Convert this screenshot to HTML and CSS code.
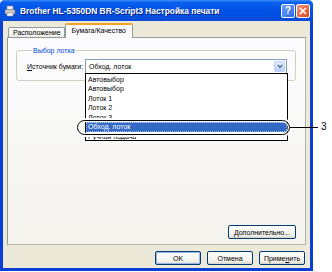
FILE: index.html
```html
<!DOCTYPE html>
<html lang="ru">
<head>
    <meta charset="UTF-8">
    <title>Brother HL-5350DN BR-Script3 Настройка печати</title>
    <link rel="stylesheet" href="styles.css">
</head>
<body>

    <div class="window">
        <div class="titlebar">
            <svg class="app-icon" width="12" height="12" viewBox="0 0 12 12">
                <rect x="3" y="1" width="6" height="4" fill="#f4f4f4" stroke="#8a8a8a" stroke-width="0.6"/>
                <rect x="1" y="4.5" width="10" height="4.5" rx="1" fill="#c9c9c9" stroke="#6d6d6d" stroke-width="0.6"/>
                <rect x="3" y="8" width="6" height="3" fill="#ffffff" stroke="#8a8a8a" stroke-width="0.6"/>
            </svg>
            <span class="title">Brother HL-5350DN BR-Script3 Настройка печати</span>
            <div class="caption-btns">
                <span class="cap-btn help">?</span>
                <span class="cap-btn close">
                    <svg width="8" height="8" viewBox="0 0 8 8">
                        <path d="M1 1 L7 7 M7 1 L1 7" stroke="#fff" stroke-width="1.6"/>
                    </svg>
                </span>
            </div>
        </div>

        <div class="client">
            <div class="tabs">
                <span class="tab">Расположение</span>
                <span class="tab active">Бумага/Качество</span>
            </div>

            <div class="tab-page">
                <fieldset class="group">
                    <legend>Выбор лотка</legend>
                    <div class="row">
                        <span class="label"><u>И</u>сточник бумаги:</span>
                        <div class="combo">
                            <span class="combo-text">Обход. лоток</span>
                            <span class="combo-arrow">
                                <svg width="6" height="5" viewBox="0 0 6 5">
                                    <path d="M0.8 1 L3 3.3 L5.2 1" fill="none" stroke="#4d6185" stroke-width="1.2"/>
                                </svg>
                            </span>
                        </div>
                    </div>
                </fieldset>

                <div class="page-foot">
                    <button class="btn wide"><u>Д</u>ополнительно...</button>
                </div>
            </div>

            <div class="dialog-btns">
                <button class="btn default">OK</button>
                <button class="btn">Отмена</button>
                <button class="btn">Приме<u>н</u>ить</button>
            </div>
        </div>
    </div>

    <ul class="droplist">
        <li>Автовыбор</li>
        <li>Автовыбор</li>
        <li>Лоток 1</li>
        <li>Лоток 2</li>
        <li>Лоток 3</li>
        <li class="selected"><span>Обход. лоток</span></li>
        <li>Ручная подача</li>
    </ul>

    <div class="callout-ring"></div>
    <div class="callout-line"></div>
    <span class="callout-num">3</span>

</body>
</html>
```

FILE: styles.css
```css
* {
    margin: 0;
    padding: 0;
    box-sizing: border-box;
}

body {
    width: 332px;
    height: 272px;
    background: #fff;
    font-family: 'Liberation Sans', Arial, sans-serif;
    font-size: 7px;
    color: #000;
    position: relative;
    overflow: hidden;
}

.window {
    width: 313px;
    height: 271px;
    display: flex;
    flex-direction: column;
    background: #0a3fd6;
    border-radius: 5px 5px 0 0;
}

.titlebar {
    height: 21px;
    display: flex;
    align-items: center;
    padding: 0 3px 0 4px;
    border-radius: 5px 5px 0 0;
    background: linear-gradient(#3d8cf7 0%, #0a5ff0 12%, #0053e6 45%, #0050e3 70%, #0a4bd8 100%);
}

.app-icon {
    margin-right: 4px;
}

.title {
    flex: 1;
    color: #fff;
    font-weight: bold;
    font-size: 8.4px;
    text-shadow: 1px 1px 0 #0a1e7a;
}

.caption-btns {
    display: flex;
    gap: 1px;
}

.cap-btn {
    width: 14px;
    height: 14px;
    border: 1px solid #fff;
    border-radius: 2px;
    display: flex;
    align-items: center;
    justify-content: center;
    color: #fff;
    font-weight: bold;
    font-size: 10px;
}

.help {
    background: linear-gradient(135deg, #6ea2fb, #2d68e6);
}

.close {
    background: linear-gradient(135deg, #f09a7c, #d9471f);
}

.client {
    flex: 1;
    margin: 0 3px 3px 3px;
    background: #ece9d8;
    padding: 2px 4px 0 4px;
    display: flex;
    flex-direction: column;
}

.tabs {
    display: flex;
    align-items: flex-end;
    height: 14px;
    padding-left: 1px;
    position: relative;
    z-index: 1;
}

.tab {
    height: 10px;
    line-height: 9px;
    padding: 0 3px 0 4px;
    border: 1px solid #919b9c;
    border-bottom: none;
    border-radius: 2px 2px 0 0;
    background: linear-gradient(#fefefe, #ecebe5);
}

.tab.active {
    height: 15px;
    line-height: 11px;
    margin-bottom: -1px;
    padding: 0 6px 0 6px;
    background: #fcfcfe;
    border-top: 2px solid #f4a529;
}

.tab-page {
    height: 208px;
    border: 1px solid #919b9c;
    border-right-color: #b5b4ab;
    border-bottom-color: #b5b4ab;
    background: linear-gradient(#fcfcfe, #f4f3ee);
    padding: 8px 9px 0 8px;
    display: flex;
    flex-direction: column;
}

.group {
    height: 35px;
    border: 1px solid #d0d0bf;
    border-radius: 3px;
    padding: 4px 8px 0 10px;
}

.group legend {
    color: #0046d5;
    padding: 0 1px;
    margin-left: 5px;
    line-height: 9px;
}

.row {
    display: flex;
    align-items: center;
}

.label {
    width: 58px;
}

.combo {
    flex: 1;
    height: 15px;
    border: 1px solid #7f9db9;
    background: #fff;
    display: flex;
    align-items: center;
    padding: 0 1px 0 3px;
}

.combo-text {
    flex: 1;
}

.combo-arrow {
    width: 11px;
    height: 11px;
    border-radius: 1px;
    background: linear-gradient(#e2ecfd, #b9d0f6);
    border: 1px solid #c3d3fd;
    display: flex;
    align-items: center;
    justify-content: center;
}

.page-foot {
    margin-top: auto;
    display: flex;
    justify-content: flex-end;
    padding: 0 0 5px 0;
}

.btn {
    height: 14px;
    font-family: inherit;
    font-size: 7px;
    color: #000;
    border: 1px solid #003c74;
    border-radius: 2px;
    background: linear-gradient(#ffffff, #f0f0ea 80%, #d6d0c5);
    width: 46px;
}

.btn.wide {
    width: 68px;
}

.btn.default {
    box-shadow: inset 0 0 0 1px #98b8ea;
}

.dialog-btns {
    display: flex;
    justify-content: flex-end;
    gap: 6px;
    padding: 6px 1px 0 0;
}

.droplist {
    position: absolute;
    left: 85px;
    top: 73px;
    width: 203px;
    height: 68px;
    list-style: none;
    background: #fff;
    border: 1px solid #000;
    overflow: hidden;
    padding-top: 0.5px;
}

.droplist li {
    height: 9.6px;
    line-height: 9.6px;
    padding-left: 2px;
}

.droplist li.selected {
    background: #316ac5;
    color: #fff;
    outline: 1px dotted #9fb8e0;
    outline-offset: -1px;
}

.callout-ring {
    position: absolute;
    left: 77px;
    top: 119.5px;
    width: 213px;
    height: 15.5px;
    border: 1.6px solid #000;
    border-radius: 8px;
    box-shadow: 0 0 0 2px #fff, inset 0 0 0 1.2px #fff;
}

.callout-line {
    position: absolute;
    left: 290px;
    top: 127px;
    width: 28px;
    height: 1px;
    background: #000;
}

.callout-num {
    position: absolute;
    left: 321px;
    top: 121px;
    font-size: 10px;
    line-height: 12px;
}
```
